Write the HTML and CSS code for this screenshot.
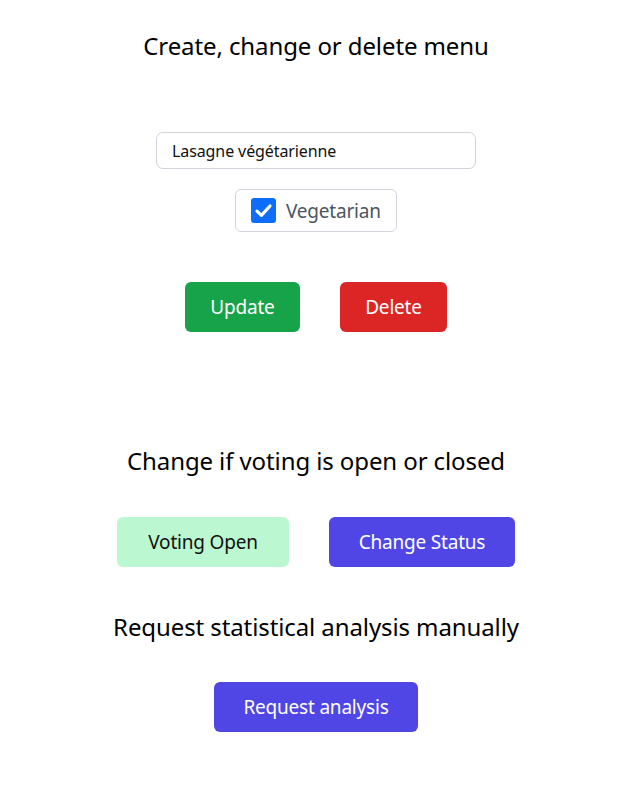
FILE: index.html
```html
<!DOCTYPE html>
<html lang="en">
<head>
<meta charset="utf-8">
<title>Menu admin</title>
<link rel="stylesheet" href="styles.css">
</head>
<body>
<main class="page">
  <section class="section section-menu">
    <h2 class="heading">Create, change or delete menu</h2>
    <input class="text-input" type="text" value="Lasagne végétarienne">
    <label class="check-box">
      <span class="check">
        <svg viewBox="0 0 25 25" width="25" height="25"><rect x="0" y="0" width="25" height="25" rx="3" fill="#0d6efd"/><path d="M6 13.2 L10.4 17.4 L19 8" fill="none" stroke="#fff" stroke-width="3.2" stroke-linecap="round" stroke-linejoin="round"/></svg>
      </span>
      <span class="check-label">Vegetarian</span>
    </label>
    <div class="btn-row btn-row-menu">
      <button class="btn btn-green">Update</button>
      <button class="btn btn-red">Delete</button>
    </div>
  </section>
  <section class="section section-voting">
    <h2 class="heading">Change if voting is open or closed</h2>
    <div class="btn-row">
      <button class="btn btn-open">Voting Open</button>
      <button class="btn btn-indigo">Change Status</button>
    </div>
  </section>
  <section class="section section-analysis">
    <h2 class="heading">Request statistical analysis manually</h2>
    <div class="btn-row">
      <button class="btn btn-indigo btn-wide">Request analysis</button>
    </div>
  </section>
</main>
</body>
</html>
```

FILE: styles.css
```css
* { box-sizing: border-box; }
html, body { margin: 0; padding: 0; background: #fff; }
body {
  font-family: "Noto Sans", "Open Sans", sans-serif;
  color: #000;
}
.page {
  display: flex;
  flex-direction: column;
  align-items: center;
  width: 632px;
}
.section {
  display: flex;
  flex-direction: column;
  align-items: center;
}
.heading {
  margin: 0;
  font-weight: 400;
  font-size: 24px;
  line-height: 32px;
  letter-spacing: -0.1px;
}
.section-menu { padding-top: 30px; }
.section-menu .heading { margin-bottom: 70px; }
.text-input {
  width: 320px;
  height: 37px;
  border: 1px solid #d1d5db;
  border-radius: 7px;
  padding: 0 15px;
  font-family: inherit;
  font-size: 16px;
  letter-spacing: -0.1px;
  color: #111;
  outline: none;
}
.check-box {
  margin-top: 20px;
  width: 162px;
  height: 43px;
  border: 1px solid #d1d5db;
  border-radius: 6px;
  display: flex;
  align-items: center;
  padding-left: 15px;
  gap: 10px;
}
.check { display: flex; width: 25px; height: 25px; }
.check-label {
  font-size: 19px;
  color: #4b5563;
  letter-spacing: -0.2px;
}
.btn-row {
  display: flex;
  gap: 40px;
  margin-top: 40px;
}
.btn-row-menu { margin-top: 50px; }
.btn {
  height: 50px;
  border: none;
  border-radius: 6px;
  padding: 0 20px;
  font-family: inherit;
  font-size: 19px;
  letter-spacing: -0.2px;
  color: #fff;
}
.btn-green { background: #16a34a; width: 115px; }
.btn-red { background: #dc2626; width: 107px; }
.btn-open { background: #bbf7d0; color: #111; width: 172px; }
.btn-indigo { background: #4f46e5; width: 186px; }
.btn-wide { width: 204px; }
.section-voting { margin-top: 113px; }
.section-analysis { margin-top: 44px; }
.section-analysis .btn-row { margin-top: 39px; }
```
